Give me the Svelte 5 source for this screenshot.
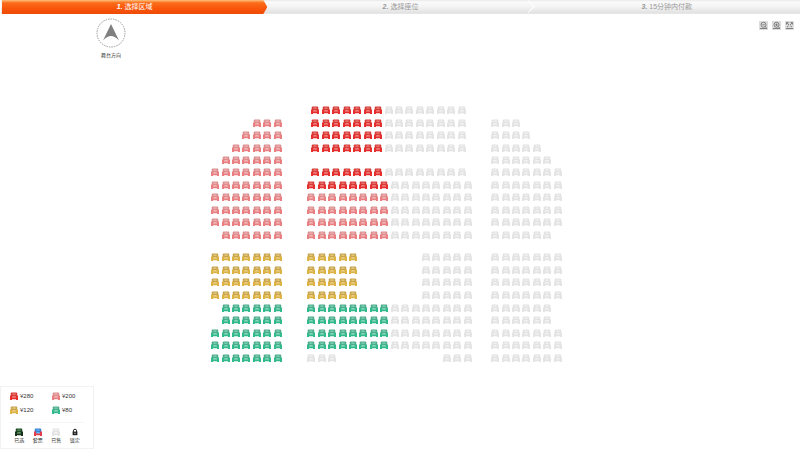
<script lang="ts">
  type Kind = 'red' | 'pink' | 'gold' | 'green' | 'picked' | 'bundle' | 'sold';

  // One character per seat, '.' leaves the place empty.
  const codes: Record<string, Kind> = {
    r: 'red',
    p: 'pink',
    y: 'gold',
    g: 'green',
    s: 'sold',
  };

  const steps = ['选择区域', '选择座位', '15分钟内付款'];

  const repeat = (row: string, times: number): string[] => Array(times).fill(row);

  const front = [
    [
      '.......',
      '....ppp',
      '...pppp',
      '..ppppp',
      '.pppppp',
      ...repeat('ppppppp', 5),
      '.pppppp',
    ],
    [
      ...repeat('rrrrrrrssssssss', 4),
      '...............',
      'rrrrrrrssssssss',
      'rrrrrrrrssssssss',
      ...repeat('ppppppppssssssss', 4),
    ],
    [
      '.......',
      'sss....',
      'ssss...',
      'sssss..',
      'ssssss.',
      ...repeat('sssssss', 5),
      'ssssss.',
    ],
  ];

  const back = [
    [...repeat('yyyyyyy', 4), ...repeat('.gggggg', 2), ...repeat('ggggggg', 3)],
    [...repeat('yyyyy......sssss', 4), ...repeat('ggggggggssssssss', 4), 'sss..........sss'],
    [...repeat('sssssss', 4), ...repeat('ssssss.', 2), ...repeat('sssssss', 3)],
  ];

  const tiers = [
    { name: 'front', blocks: front },
    { name: 'back', blocks: back },
  ];
  const sides = ['left', 'middle', 'right'];

  const prices: { kind: Kind; price: number }[] = [
    { kind: 'red', price: 280 },
    { kind: 'pink', price: 200 },
    { kind: 'gold', price: 120 },
    { kind: 'green', price: 80 },
  ];

  const states: { kind: Kind | 'locked'; label: string }[] = [
    { kind: 'picked', label: '已选' },
    { kind: 'bundle', label: '套票' },
    { kind: 'sold', label: '已售' },
    { kind: 'locked', label: '锁定' },
  ];

  const tools = [
    { name: 'out', label: '缩小' },
    { name: 'in', label: '放大' },
    { name: 'reset', label: '还原' },
  ];
</script>

{#snippet seat(kind: Kind)}
  <svg class="seat seat--{kind}" viewBox="0 0 20 20" aria-hidden="true">
    <path class="seat__back" d="M2 14V3Q2 1 4 1h12q2 0 2 2v11z" />
    <path class="seat__shine" d="M6 4h8v3H6zM6 10h8v3H6z" />
    <path
      class="seat__arms"
      d="M0 10q0-2 2.500-2T5 10v4h10v-4q0-2 2.500-2T20 10v10h-5v-2H5v2H0z"
    />
  </svg>
{/snippet}

<ol class="steps">
  {#each steps as step, i}
    <li class="steps__item" class:steps__item--active={i === 0}>
      <b class="steps__number">{i + 1}.</b>
      {step}
    </li>
  {/each}
</ol>

<header class="bar">
  <div class="stage">
    <svg class="stage__dial" viewBox="0 0 30 30" aria-hidden="true">
      <circle cx="15" cy="15" r="14" fill="none" stroke="#999" stroke-dasharray="1.5 1" />
      <path d="M15 6L23 22.500Q19 18 15 18T7 22.500z" fill="#808080" />
    </svg>
    <span class="stage__label">舞台方向</span>
  </div>

  <div class="tools">
    {#each tools as tool}
      <button class="tools__button" type="button" aria-label={tool.label}>
        <svg viewBox="0 0 18 18" fill="none" stroke="#777" stroke-width="1.8">
          {#if tool.name === 'reset'}
            <path d="M4 4l4 4M14 4l-4 4M4 12l3-2M14 12l-3-2M3 7V3h4M15 7V3h-4M2 15h14" />
          {:else}
            <circle cx="9" cy="7.500" r="5" />
            <path d="M6.500 7.500h5M12.500 11l2.500 3M2 15h14" />
            {#if tool.name === 'in'}
              <path d="M9 5v5" />
            {/if}
          {/if}
        </svg>
      </button>
    {/each}
  </div>
</header>

<main>
  {#each tiers as tier}
    <div class="tier tier--{tier.name}">
      {#each tier.blocks as rows, b}
        <div class="block block--{sides[b]}">
          {#each rows as row, r}
            <div class="row" class:row--short={row.length === 15}>
              {#each row as code, c}
                {#if codes[code]}
                  <button
                    class="place"
                    type="button"
                    disabled={code === 's'}
                    aria-label="{r + 1}排{c + 1}座"
                  >
                    {@render seat(codes[code])}
                  </button>
                {:else}
                  <span class="place"></span>
                {/if}
              {/each}
            </div>
          {/each}
        </div>
      {/each}
    </div>
  {/each}
</main>

<aside class="legend">
  <ul class="legend__prices">
    {#each prices as item}
      <li class="legend__price">
        {@render seat(item.kind)}
        <span>¥{item.price}</span>
      </li>
    {/each}
  </ul>
  <ul class="legend__states">
    {#each states as item}
      <li class="legend__state">
        {#if item.kind === 'locked'}
          <svg class="seat" viewBox="0 0 20 20" aria-hidden="true">
            <path d="M6 10V7a4 4 0 0 1 8 0v3" fill="none" stroke="#222" stroke-width="2.500" />
            <path d="M4 9h12v9H4z" fill="#222" />
            <path d="M9 12h2v3H9z" fill="#fff" />
          </svg>
        {:else}
          {@render seat(item.kind)}
        {/if}
        <span>{item.label}</span>
      </li>
    {/each}
  </ul>
</aside>

<style>
  :global(body) {
    background: #fff;
    color: #333;
    font-family: 'Liberation Sans', 'Noto Sans CJK SC', sans-serif;
  }

  ol,
  ul {
    margin: 0;
    padding: 0;
    list-style: none;
  }

  button {
    padding: 0;
    border: 0;
    background: none;
    cursor: pointer;
  }

  button:disabled {
    cursor: default;
  }

  .steps {
    display: grid;
    grid-template-columns: repeat(3, 1fr);
    height: 13px;
    margin: 0 0 0 1px;
    border-bottom: 1px solid #e6e6e6;
    background: linear-gradient(#e9e9e9, #fafafa 15%, #f4f4f4 50%, #e2e2e2);
    color: #999;
    font-size: 7px;
    line-height: 14px;
    text-align: center;
  }

  .steps__item {
    position: relative;
  }

  .steps__item:nth-child(2)::after {
    content: '';
    position: absolute;
    top: 2px;
    right: 1px;
    width: 8px;
    height: 8px;
    border-top: 1px solid #fff;
    border-right: 1px solid #fff;
    transform: rotate(45deg);
  }

  .steps__item--active {
    margin-left: 1px;
    background: linear-gradient(#ffc07c, #fb6d1b 20%, #f9560b 60%, #ee4a05);
    clip-path: polygon(0 0, calc(100% - 4px) 0, 100% 50%, calc(100% - 4px) 100%, 0 100%);
    color: #fff;
  }

  .steps__number {
    font-style: italic;
  }

  .bar {
    display: flex;
    justify-content: space-between;
    padding: 4px 6px 0 96px;
  }

  .stage {
    display: flex;
    flex-direction: column;
    align-items: center;
    gap: 3px;
  }

  .stage__dial {
    width: 30px;
    height: 30px;
  }

  .stage__label {
    font-size: 5px;
    line-height: 8px;
  }

  .tools {
    display: flex;
    gap: 4px;
    padding-top: 3px;
  }

  .tools__button {
    width: 9px;
    height: 9px;
    background: #dcdcdc;
  }

  .tools__button svg {
    display: block;
  }

  main {
    display: grid;
    gap: 10px;
    padding: 45px 0 22px;
  }

  .tier {
    display: grid;
    grid-template-columns: 210fr 73fr 23fr 167fr 17fr 73fr 237fr;
  }

  .tier--front {
    height: 137px;
  }

  .tier--back {
    height: 113px;
  }

  .block {
    display: flex;
    flex-direction: column;
  }

  .block--left {
    grid-column: 2;
  }

  .block--middle {
    grid-column: 4;
  }

  .block--right {
    grid-column: 6;
  }

  .row {
    display: flex;
    flex: 1;
    align-items: center;
  }

  .row--short {
    padding: 0 6px 0 4px;
  }

  .place {
    display: flex;
    flex: 1;
    justify-content: center;
    min-width: 0;
  }

  .seat {
    display: block;
    width: 8px;
    height: 8px;
    --back: #e2e2e2;
    --shine: #f4f4f4;
    --arms: #e4e4e4;
  }

  .seat__back {
    fill: var(--back);
  }

  .seat__shine {
    fill: var(--shine);
  }

  .seat__arms {
    fill: var(--arms);
  }

  .seat--red {
    --back: #d43c3a;
    --shine: #f47f78;
    --arms: #e52f2f;
  }

  .seat--pink {
    --back: #d98f90;
    --shine: #f7b4b4;
    --arms: #ea7f82;
  }

  .seat--gold {
    --back: #c4a24f;
    --shine: #edcf7c;
    --arms: #ddb443;
  }

  .seat--green {
    --back: #4fa98a;
    --shine: #7edcbb;
    --arms: #32b98c;
  }

  .seat--picked {
    --back: #1d4a25;
    --shine: #5c9460;
    --arms: #17331b;
  }

  .seat--bundle {
    --back: #3b7fd0;
    --shine: #62b8f4;
    --arms: #e03c4c;
  }

  .legend {
    box-sizing: border-box;
    width: 94px;
    padding: 5px 9px 4px;
    border: 1px solid #f2f2f2;
  }

  .legend__prices {
    display: grid;
    grid-template-columns: 42px 1fr;
    row-gap: 6px;
    padding-bottom: 8px;
  }

  .legend__price {
    display: flex;
    align-items: center;
    gap: 2px;
    font-size: 6px;
    line-height: 8px;
  }

  .legend__states {
    display: grid;
    grid-template-columns: repeat(4, 1fr);
    padding-top: 5px;
    border-top: 1px solid #f6f6f6;
  }

  .legend__state {
    display: flex;
    flex-direction: column;
    align-items: center;
    font-size: 5px;
    line-height: 8px;
  }
</style>
